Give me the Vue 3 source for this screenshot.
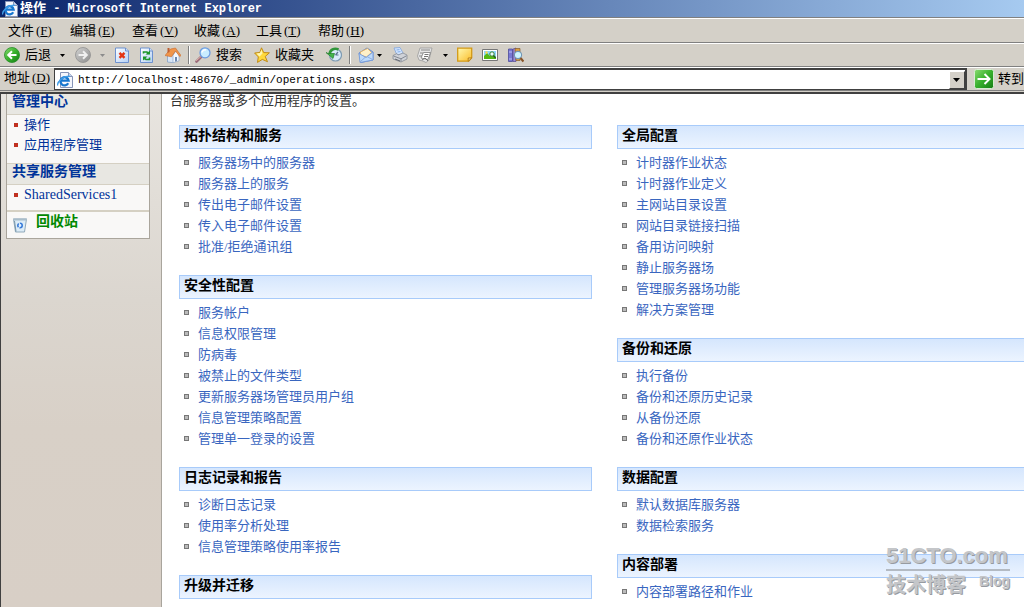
<script setup>
const menus = [
  ['文件', 'F'], ['编辑', 'E'], ['查看', 'V'], ['收藏', 'A'], ['工具', 'T'], ['帮助', 'H'],
]
const columns = [
  [
    { title: '拓扑结构和服务', links: ['服务器场中的服务器', '服务器上的服务', '传出电子邮件设置', '传入电子邮件设置', '批准/拒绝通讯组'] },
    { title: '安全性配置', links: ['服务帐户', '信息权限管理', '防病毒', '被禁止的文件类型', '更新服务器场管理员用户组', '信息管理策略配置', '管理单一登录的设置'] },
    { title: '日志记录和报告', links: ['诊断日志记录', '使用率分析处理', '信息管理策略使用率报告'] },
    { title: '升级并迁移', links: [] },
  ],
  [
    { title: '全局配置', links: ['计时器作业状态', '计时器作业定义', '主网站目录设置', '网站目录链接扫描', '备用访问映射', '静止服务器场', '管理服务器场功能', '解决方案管理'] },
    { title: '备份和还原', links: ['执行备份', '备份和还原历史记录', '从备份还原', '备份和还原作业状态'] },
    { title: '数据配置', links: ['默认数据库服务器', '数据检索服务'] },
    { title: '内容部署', links: ['内容部署路径和作业'] },
  ],
]
</script>

<template>
  <div class="window">
    <svg class="defs" aria-hidden="true">
      <defs>
        <linearGradient id="green" x1="0" y1="0" x2="1" y2="1"><stop offset="0" stop-color="#8bdc72" /><stop offset=".5" stop-color="#38b02c" /><stop offset="1" stop-color="#147c14" /></linearGradient>
        <linearGradient id="grey" x1="0" y1="0" x2="1" y2="1"><stop offset="0" stop-color="#d2d2d2" /><stop offset="1" stop-color="#8d8d8d" /></linearGradient>
        <linearGradient id="sheet" x1="0" y1="0" x2="1" y2="1"><stop offset="0" stop-color="#ffffff" /><stop offset="1" stop-color="#b4d0f6" /></linearGradient>
        <linearGradient id="gold" x1="0" y1="0" x2="1" y2="1"><stop offset="0" stop-color="#fff9b0" /><stop offset="1" stop-color="#fbbd2a" /></linearGradient>
        <symbol id="ie" viewBox="0 0 16 16">
          <path d="M3.5.5h8l4 4v11h-12z" fill="#f4f6fc" stroke="#8795b8" />
          <path d="M11.5.5v4h4" fill="#c7d4ec" stroke="#8795b8" />
          <path d="M11.2 11.2A4.1 4.1 0 1 1 11.600 8.600H4.200" fill="none" stroke="#1676cf" stroke-width="2.300" />
          <path d="M.8 13.600C-.4 10.500 6 3.600 12.800 4.300" fill="none" stroke="#3f9de7" stroke-width="1.300" />
        </symbol>
      </defs>
    </svg>

    <header class="titlebar">
      <svg class="icon"><use href="#ie" /></svg>
      <h1>操作<span> - Microsoft Internet Explorer</span></h1>
    </header>

    <nav class="menubar">
      <button v-for="m in menus" :key="m[1]" type="button">{{ m[0] }}<span>(<u>{{ m[1] }}</u>)</span></button>
    </nav>

    <div class="toolbar">
      <button type="button">
        <svg class="icon" viewBox="0 0 16 16"><circle cx="8" cy="8" r="7.500" fill="url(#green)" stroke="#258d25" stroke-width=".8" /><path d="M12.500 8H4.500M8 4.200L4.200 8 8 11.800" fill="none" stroke="#fff" stroke-width="2" /></svg>
        <span class="g5">后退</span>
      </button>
      <button type="button" class="g9" aria-label="后退列表"><svg class="caret" viewBox="0 0 5 3"><path d="M0 0h5L2.500 3z" /></svg></button>
      <button type="button" class="g10" aria-label="前进"><svg class="icon" viewBox="0 0 16 16"><circle cx="8" cy="8" r="7.500" fill="url(#grey)" stroke="#909090" stroke-width=".8" /><path d="M3.500 8h8M8 4.200L11.800 8 8 11.800" fill="none" stroke="#f0f0f0" stroke-width="2" /></svg></button>
      <button type="button" class="g9" aria-label="前进列表"><svg class="caret off" viewBox="0 0 5 3"><path d="M0 0h5L2.500 3z" /></svg></button>
      <button type="button" class="g9" aria-label="停止"><svg class="icon" viewBox="0 0 16 16"><path d="M1.500 1h10l3 3v11.500h-13z" fill="url(#sheet)" stroke="#6d91cf" /><path d="M11.500 1v3h3" fill="#cfe0fa" stroke="#6d91cf" /><path d="M5.500 5.800l5 5M10.500 5.800l-5 5" stroke="#e43413" stroke-width="2.400" /></svg></button>
      <button type="button" class="g9" aria-label="刷新"><svg class="icon" viewBox="0 0 16 16"><path d="M1.500 1h9l3 3v11.500h-12z" fill="url(#sheet)" stroke="#6d91cf" /><path d="M10.500 1v3h3" fill="#cfe0fa" stroke="#6d91cf" /><path d="M4.500 6.500V5h3.500l1.500 2" fill="none" stroke="#1b9628" stroke-width="1.600" /><path d="M6.500 7.500h4.500v-4zM4 9.500h4.500l-4.500 4z" fill="#1b9628" /><path d="M5.500 11.500l1.500 1h3.500v-2" fill="none" stroke="#1b9628" stroke-width="1.600" /></svg></button>
      <button type="button" class="g10" aria-label="主页"><svg class="icon" viewBox="0 0 16 16"><path d="M2.500 9v6l6 .8V6z" fill="#d8e6f7" stroke="#7b9ac3" stroke-width=".7" /><path d="M8 15.800l6-2V8l-3-4-3 4z" fill="#f5f8fd" stroke="#8aa5cc" stroke-width=".7" /><path d="M0 8.500L5.500 2 10.500 1 16 8.500l-1.300 1L10.500 4 6.500 9.800z" fill="#f0954a" stroke="#c76a2e" stroke-width=".6" /><path d="M2.500 1h2v4l-2 1z" fill="#bd6034" /><path d="M10 10h2v4l-2 .8z" fill="#6c87ae" /></svg></button>
      <i class="sep g7"></i>
      <button type="button" class="g5">
        <svg class="icon" viewBox="0 0 16 16"><path d="M6.500 9.500L1.500 14.500" stroke="#9a6a78" stroke-width="2.600" stroke-linecap="round" /><path d="M6 9.500L1.500 13.500" stroke="#e2b2a8" stroke-linecap="round" /><circle cx="10" cy="5.800" r="5" fill="#c9edff" stroke="#6b9be0" stroke-width="1.300" /><path d="M7 5.500a3 3 0 0 1 4-2.500" fill="none" stroke="#fff" stroke-width="1.500" /></svg>
        <span class="g5">搜索</span>
      </button>
      <button type="button" class="g12">
        <svg class="icon" viewBox="0 0 16 16"><path d="M7.500.8l2.200 4.800 5.700.2-4.200 3.700 2.300 5.200-5.200-2.300-4.800 3 .8-5.500L.6 6l5.200-.5z" fill="#ffd93c" stroke="#c18b16" stroke-width="1" /><path d="M7.500 2.500l1 4-3 3-3-3 3.500-.4z" fill="#fff6b0" /></svg>
        <span class="g5">收藏夹</span>
      </button>
      <button type="button" class="g12" aria-label="历史"><svg class="icon" viewBox="0 0 16 16"><circle cx="9.500" cy="8" r="6" fill="#d9eafa" stroke="#7e9bb2" stroke-width="1.200" /><path d="M9.500 8l2.500-3M9.500 8h3" fill="none" stroke="#58728e" stroke-width="1.200" /><path d="M12.500 2.500C8 .5 4 3 3.600 7" fill="none" stroke="#31963a" stroke-width="2.600" /><path d="M0 5.500l2 1h6.500L7 11.500z" fill="#43b54c" stroke="#217d2b" stroke-width=".7" /></svg></button>
      <i class="sep g7"></i>
      <button type="button" class="g7" aria-label="邮件"><svg class="icon" viewBox="0 0 16 16"><path d="M1 6l8-5 6 4v8L3 15.500z" fill="#8eb7ef" stroke="#6c8fcf" /><path d="M2.500 5l7-3.500 4 4-5 4.500-6-2z" fill="#fff0c8" stroke="#e7ad58" stroke-width=".8" /><path d="M1 6.500l7 4 7-5.500v8L2 15.500z" fill="#bddafb" stroke="#769bd9" stroke-width=".9" /><path d="M2 15l5.500-5M14.500 12.500L9 9.500" stroke="#8caee1" /></svg></button>
      <button type="button" class="g3" aria-label="邮件列表"><svg class="caret" viewBox="0 0 5 3"><path d="M0 0h5L2.500 3z" /></svg></button>
      <button type="button" class="g10" aria-label="打印"><svg class="icon" viewBox="0 0 16 16"><path d="M2 1l6-.5 3.500 6.500-6.500 1z" fill="#d3e5ff" stroke="#7fa5dd" stroke-width=".8" /><path d="M4.500 3l3-.4M5.500 5l3-.4" stroke="#82aee9" /><path d="M1 8.500l4-2 1 1.500 5-2 4 2v4l-6 3-8-3z" fill="#cfd2d8" stroke="#888d96" stroke-width=".8" /><path d="M1.500 9l7.500 2.800 5.500-3M9 12v2.500" fill="none" stroke="#858a94" /><path d="M3 12l5 2" stroke="#62666d" /></svg></button>
      <button type="button" class="g9" aria-label="编辑"><svg class="icon" viewBox="0 0 16 16"><path d="M3 1h12l-3 12-3 2.500-3-1.500-4-1-1.500-4z" fill="#e5e5e5" stroke="#9b9b9b" stroke-width=".8" /><path d="M4 3h9M3 6h3M2 9h3" stroke="#888" /><path d="M6.500 5.500h7l-2.500 7-7-1.500z" fill="#fff" stroke="#797979" stroke-width=".8" /><path d="M7.500 7.500h4M7 9.500h4M5 13l3-2 3 3" fill="none" stroke="#666" stroke-width=".9" /></svg></button>
      <button type="button" class="g10" aria-label="编辑列表"><svg class="caret" viewBox="0 0 5 3"><path d="M0 0h5L2.500 3z" /></svg></button>
      <button type="button" class="g9" aria-label="便笺"><svg class="icon" viewBox="0 0 16 16"><path d="M.7 1.200h14v9.500l-3 3.500H.7z" fill="url(#gold)" stroke="#d39a16" stroke-width="1.300" /><path d="M14.700 11h-3.500v3.300z" fill="#fff0a0" stroke="#b67b12" /></svg></button>
      <button type="button" class="g9" aria-label="图片"><svg class="icon" viewBox="0 0 16 16"><path d="M.5 2.500h15v11H.5z" fill="#fff" stroke="#777" /><path d="M2 4h12v8H2z" fill="#8ed6ff" /><path d="M2 9l3-3 3 3 2-2 4 3v2H2z" fill="#55b812" /><circle cx="4.500" cy="5.500" r="1.200" fill="#ffd84a" /><circle cx="10" cy="7" r="2.200" fill="#e9faff" stroke="#38832a" /><path d="M11.500 8.500l2 2.500" stroke="#275f28" stroke-width="1.500" /></svg></button>
      <button type="button" class="g10" aria-label="信息检索"><svg class="icon" viewBox="0 0 16 16"><path d="M.5 2h4v12.500h-4z" fill="#7878d3" stroke="#4b4b9c" stroke-width=".8" /><path d="M1 5h3M1 12h3" stroke="#bdbdf5" /><path d="M5 2l3-1v13.500H5z" fill="#9d8bd8" stroke="#554b91" stroke-width=".7" /><path d="M7 1.500h5v12H8z" fill="#dc9e3e" stroke="#855c2c" stroke-width=".7" /><circle cx="10" cy="8" r="3.600" fill="#cdf3ff" stroke="#7197b5" stroke-width="1.100" /><path d="M12.500 11l3 3.500" stroke="#875327" stroke-width="2.200" /></svg></button>
    </div>

    <form class="address" @submit.prevent>
      <label for="url">地址<span>(<u>D</u>)</span></label>
      <div class="field">
        <svg class="icon"><use href="#ie" /></svg>
        <input id="url" type="text" value="http://localhost:48670/_admin/operations.aspx" />
        <button type="button" class="drop" aria-label="地址列表"><svg viewBox="0 0 7 4"><path d="M0 0h7L3.500 4z" /></svg></button>
      </div>
      <button type="submit" class="go">
        <svg viewBox="0 0 20 20"><rect x=".5" y=".5" width="19" height="19" rx="2" fill="url(#green)" stroke="#d8edd2" /><path d="M3.500 10h12M10.500 5l5 5-5 5" fill="none" stroke="#fff" stroke-width="2" /></svg>
        <span>转到</span>
      </button>
    </form>

    <div class="page">
      <aside>
        <nav class="panel">
          <h2>管理中心</h2>
          <ul>
            <li><a href="#">操作</a></li>
            <li><a href="#">应用程序管理</a></li>
          </ul>
          <h2>共享服务管理</h2>
          <ul class="single">
            <li><a href="#">SharedServices1</a></li>
          </ul>
          <a href="#" class="bin">
            <svg viewBox="0 0 16 16"><path d="M1.500 2h13l-2 13h-9z" fill="#dcecf7" stroke="#91a9ba" /><path d="M1 1.500h14v2H1z" fill="#a9bdca" /><path d="M2.500 4l1.500 10.500" stroke="#7896aa" /><circle cx="8" cy="8.500" r="2.200" fill="#e4f3ff" stroke="#397bd9" stroke-width="1.600" stroke-dasharray="3.600 1" /></svg>
            回收站
          </a>
        </nav>
      </aside>
      <main>
        <p>台服务器或多个应用程序的设置。</p>
        <div class="columns">
          <div v-for="(col, i) in columns" :key="i">
            <section v-for="s in col" :key="s.title">
              <h3>{{ s.title }}</h3>
              <ul>
                <li v-for="l in s.links" :key="l"><a href="#">{{ l }}</a></li>
              </ul>
            </section>
          </div>
        </div>
      </main>
      <div class="watermark">
        <strong>51CTO.com</strong>
        <div><span>技术博客</span><em>Blog</em></div>
      </div>
    </div>
  </div>
</template>

<style>
body { margin: 0; }
</style>

<style scoped>
.window {
  display: flex;
  flex-direction: column;
  height: 100vh;
  overflow: hidden;
  background: #d4d0c8;
  color: #000;
  font: 13px/20px "Liberation Serif", "Noto Sans CJK SC", serif;
}
button {
  display: flex;
  align-items: center;
  flex: none;
  padding: 0;
  border: 0;
  background: none;
  color: inherit;
  font: inherit;
}
h1, h2, h3, p, ul { margin: 0; padding: 0; }
ul { list-style: none; }
a { text-decoration: none; }
.defs { position: absolute; width: 0; height: 0; }
.icon { display: block; flex: none; width: 16px; height: 16px; }

.titlebar {
  display: flex;
  align-items: center;
  flex: none;
  gap: 2px;
  height: 17px;
  padding-left: 2px;
  border-bottom: 1px solid #808080;
  background: linear-gradient(90deg, #0a246a, #a6caf0);
  color: #fff;
}
h1 { font-size: 13px; line-height: 16px; white-space: pre; }
h1 span { font: bold 12px/16px "Liberation Mono", monospace; }

.menubar {
  display: flex;
  flex: none;
  height: 23px;
  padding-left: 8px;
  border-top: 1px solid #fff;
  border-bottom: 1px solid #808080;
}
.menubar button { width: 62px; }
.menubar span, label span { margin-left: 2px; }

.toolbar {
  display: flex;
  align-items: center;
  flex: none;
  height: 22px;
  padding-left: 4px;
  border-top: 1px solid #fff;
  border-bottom: 1px solid #808080;
}
.caret { display: block; width: 5px; height: 3px; }
.off { fill: #8c8c8c; }
.sep { width: 1px; height: 18px; border-left: 1px solid #808080; background: #fff; }
.g3 { margin-left: 3px; }
.g5 { margin-left: 5px; }
.g7 { margin-left: 7px; }
.g9 { margin-left: 9px; }
.g10 { margin-left: 10px; }
.g12 { margin-left: 12px; }

.address {
  display: flex;
  flex: none;
  height: 22px;
  border-top: 1px solid #fff;
  border-bottom: 1px solid #808080;
}
label { flex: none; width: 50px; padding-left: 4px; }
.field {
  display: flex;
  align-items: center;
  flex: 1;
  min-width: 0;
  padding-left: 2px;
  border: solid #404040;
  border-width: 2px 2px 1px 1px;
  background: #fff;
}
input {
  flex: 1;
  min-width: 0;
  padding: 0 0 0 5px;
  border: 0;
  outline: 0;
  background: none;
  font: 11px/18px "Liberation Mono", monospace;
}
.drop {
  justify-content: center;
  width: 16px;
  height: 18px;
  border: 1px solid;
  border-color: #fff #404040 #404040 #fff;
  background: #d4d0c8;
}
.drop svg { width: 7px; height: 4px; }
.go { gap: 4px; padding-left: 7px; white-space: nowrap; }
.go svg { flex: none; width: 20px; height: 20px; }

.page {
  position: relative;
  display: flex;
  flex: 1;
  min-height: 0;
  margin-top: 1px;
  overflow: hidden;
  border-top: 2px solid #404040;
  border-left: 1px solid #404040;
  background: #fff;
}
aside {
  flex: none;
  width: 160px;
  border-right: 1px solid #a9a59d;
  background: linear-gradient(#e8e5e0, #dbd6cf 40%, #d8d0c7 65%, #d8cfc6);
}
.panel {
  width: 142px;
  margin-left: 5px;
  border: solid #aaa59c;
  border-width: 0 1px 1px;
  background: #f9f8f7;
}
h2 {
  height: 20px;
  padding-left: 5px;
  border-bottom: 1px solid #d5d0c3;
  background: #e8e7e2;
  color: #003399;
  font-size: 14px;
  line-height: 16px;
}
.panel ul { height: 48px; border-bottom: 1px solid #d5d0c3; }
.panel .single { height: 25px; border-bottom-width: 2px; }
.panel li { display: flex; align-items: center; gap: 6px; height: 20px; padding-left: 7px; }
.panel li::before { content: ""; width: 4px; height: 4px; background: #c03020; }
.panel li a { color: #003399; }
.panel .single a { font-size: 14px; }
.bin { display: flex; gap: 8px; height: 26px; padding-left: 5px; color: #008800; font-size: 14px; font-weight: bold; }
.bin svg { width: 16px; height: 16px; padding-top: 5px; }

main { flex: 1; min-width: 0; overflow: hidden; }
p { height: 31px; padding-left: 8px; color: #333; line-height: 14px; }
.columns {
  display: grid;
  grid-template-columns: 1fr 1fr;
  gap: 25px;
  margin: 0 -6px 0 17px;
}
section { padding-bottom: 18px; }
h3 {
  height: 22px;
  margin-bottom: 3px;
  padding-left: 4px;
  border: 1px solid #a8cbfa;
  background: linear-gradient(#d5e6fd, #ecf4ff);
  font-size: 14px;
  line-height: 20px;
}
main li { display: flex; align-items: center; gap: 9px; height: 21px; padding-left: 5px; }
main li::before { content: ""; width: 3px; height: 3px; border: 1px solid #777; background: #bbb; }
main li a { color: #3966bf; }

.watermark {
  position: absolute;
  right: 14px;
  bottom: 8px;
  width: 124px;
  color: #c4c6c9;
  font-family: "Liberation Sans", "Noto Sans CJK SC", sans-serif;
  text-shadow: 1px 1px 0 #979ba1;
}
.watermark strong {
  display: block;
  border-bottom: 2px solid #b3bac3;
  font-size: 22px;
  font-weight: bold;
  line-height: 26px;
}
.watermark div { display: flex; justify-content: space-between; }
.watermark span { font-size: 20px; font-weight: bold; line-height: 28px; }
.watermark em { font-size: 14px; font-style: normal; font-weight: bold; }
</style>
